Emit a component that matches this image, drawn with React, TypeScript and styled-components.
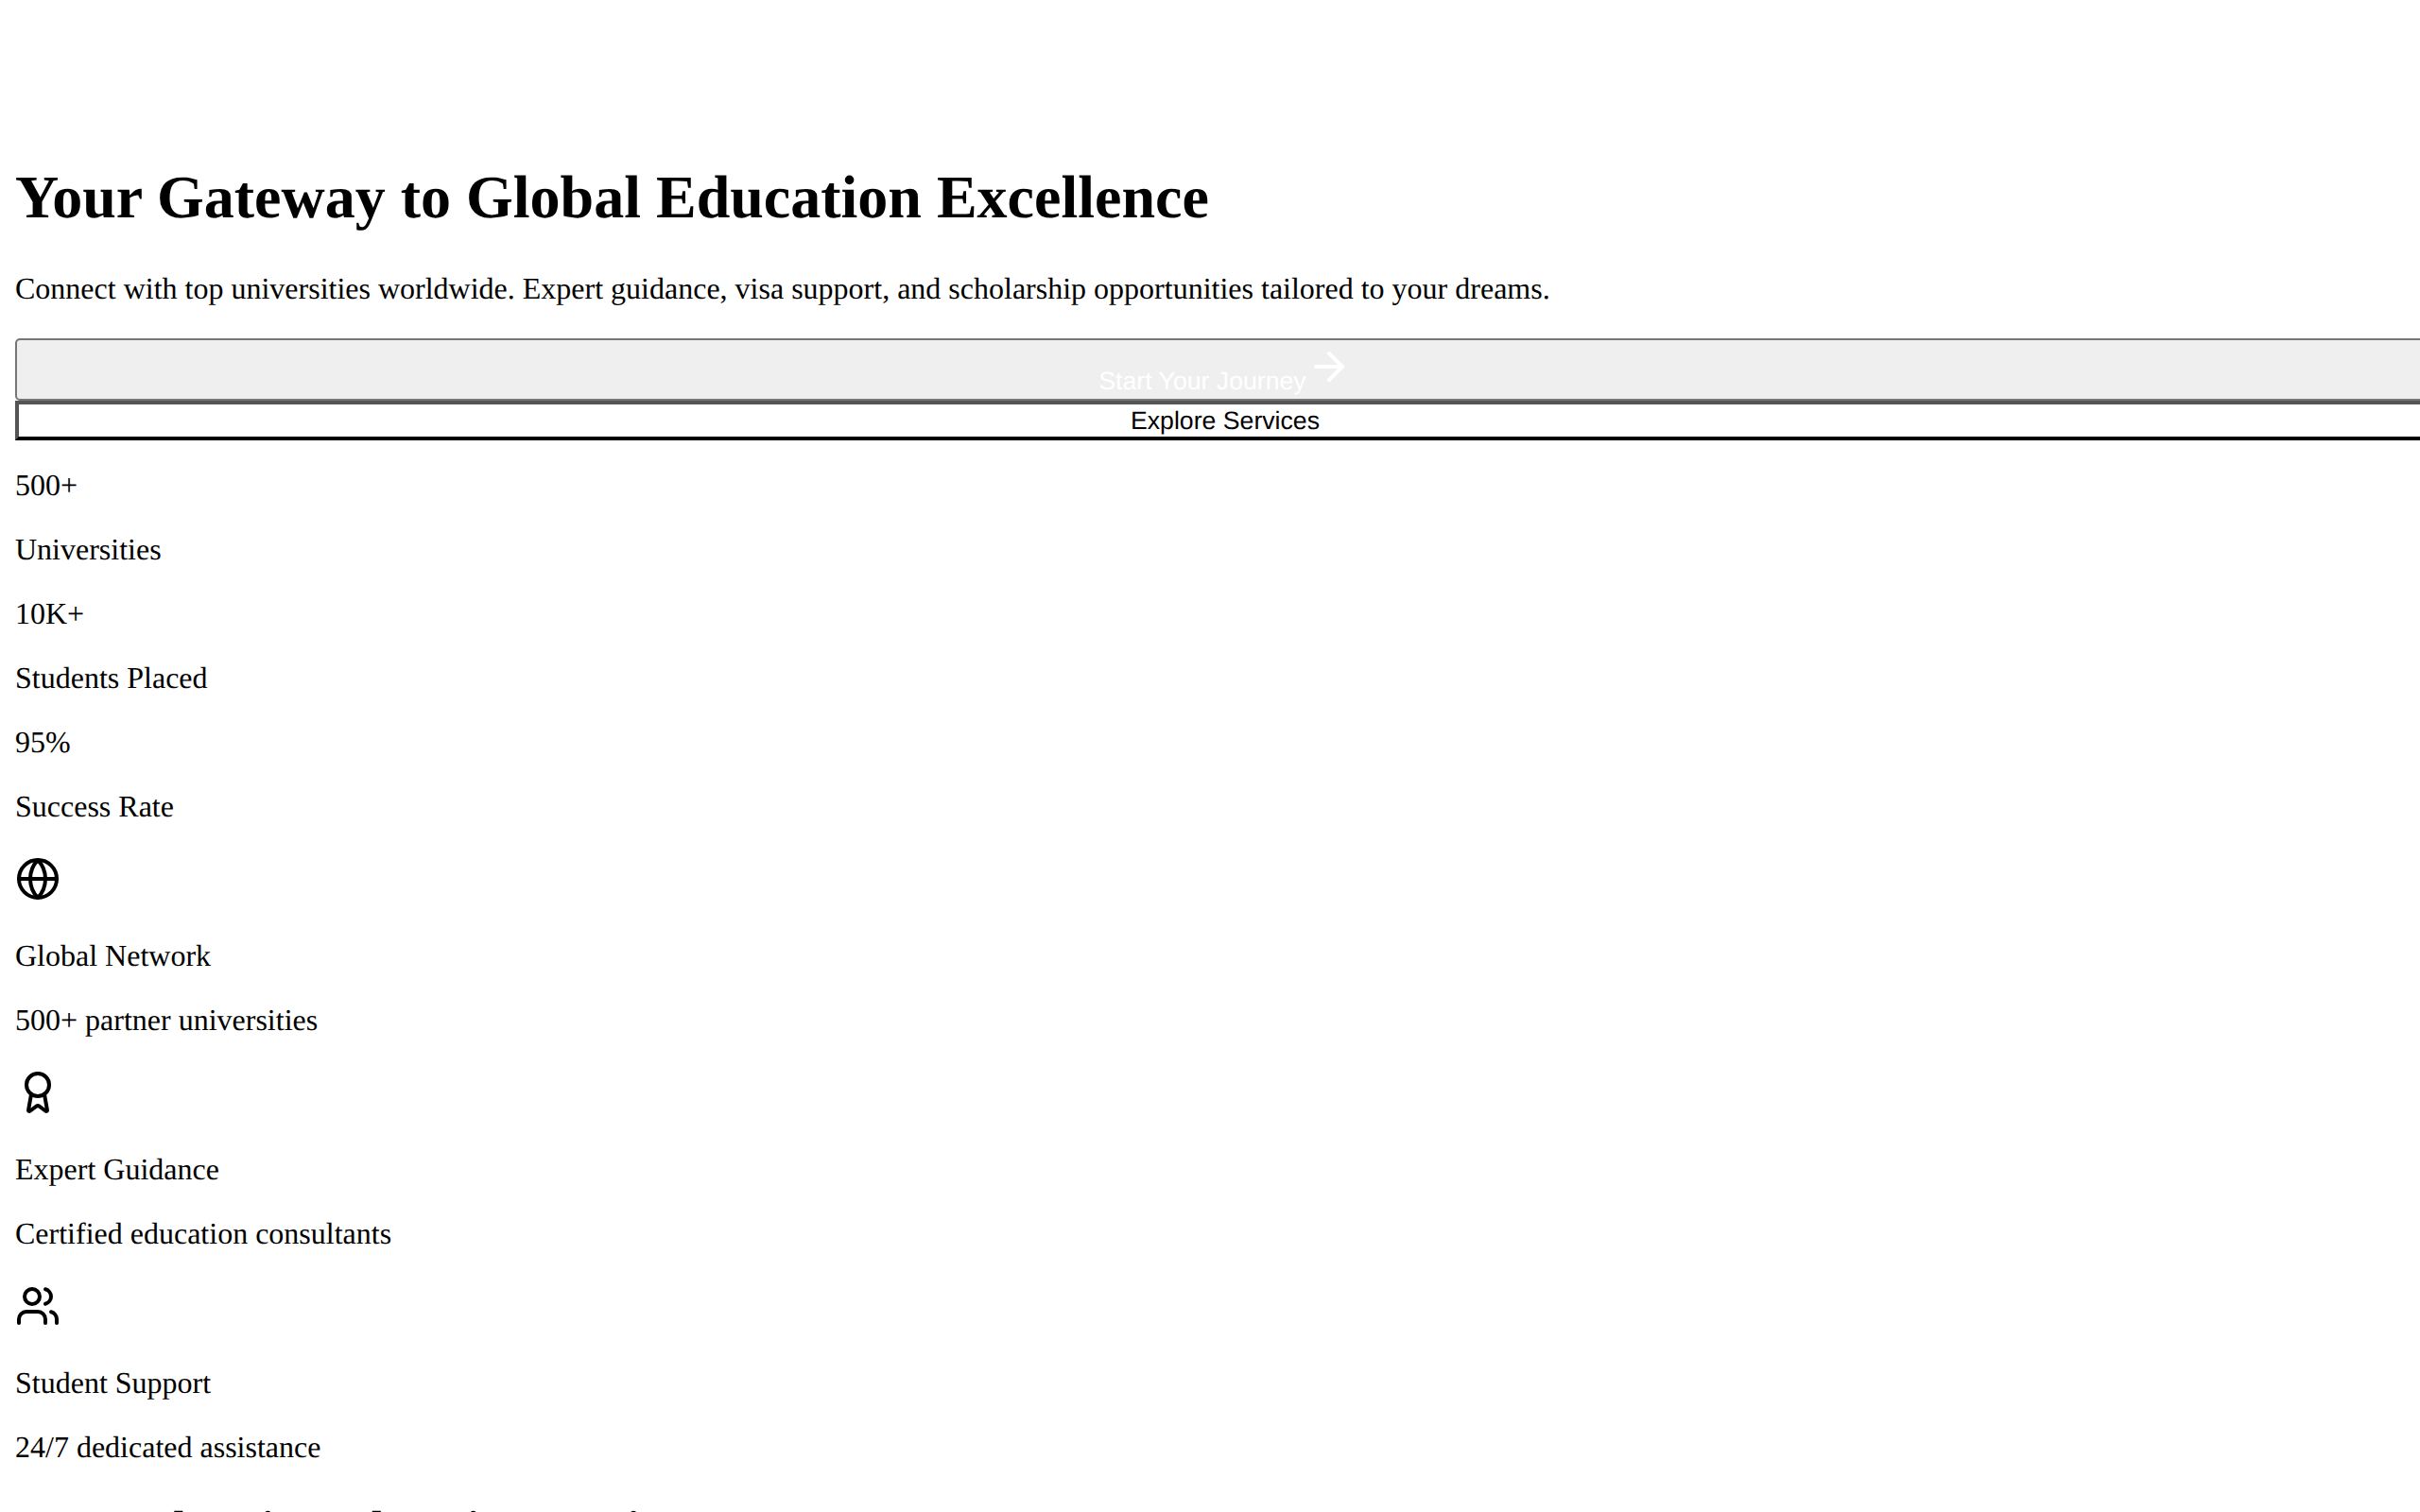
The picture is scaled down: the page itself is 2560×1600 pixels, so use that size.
import React from "react";
import { createGlobalStyle, styled } from "styled-components";
import { ArrowRight, Award, Globe, Users } from "lucide-react";

const GlobalStyle = createGlobalStyle`
  html,
  body {
    margin: 0;
    overflow: hidden;
    background-color: #fff;
  }
`;

const StyledPage = styled.main`
  box-sizing: border-box;
  width: 2560px;
  height: 1600px;
  padding: 172px 0 0 16px;
  overflow: hidden;
  font-family: "Liberation Serif", "Times New Roman", serif;
  font-size: 32px;
  line-height: 34px;
  color: #000;
  text-rendering: geometricPrecision;
`;

const StyledH1 = styled.h1`
  margin: 0;
  padding-bottom: 42px;
  font-size: 64px;
  font-weight: 700;
  line-height: 74px;
`;

const StyledText = styled.p`
  margin: 0 0 34px;
`;

const StyledActions = styled.div`
  display: flex;
  flex-direction: column;
  width: 2560px;
  padding-top: 2px;
  margin-bottom: 30px;
`;

const StyledButton = styled.button`
  box-sizing: border-box;
  width: 100%;
  margin: 0;
  font-family: "Liberation Sans", Arial, sans-serif;
  font-size: 26.6667px;
  line-height: 30px;
  text-rendering: geometricPrecision;
`;

const StyledPrimaryBtn = styled(StyledButton)`
  height: 66px;
  padding: 4px 14px;
  border: 2px solid #767676;
  border-radius: 5px;
  background-color: #efefef;
  color: #fff;
`;

const StyledOutlineBtn = styled(StyledButton)`
  height: 42px;
  padding: 2px 12px;
  border: 4px solid;
  border-color: #555 #000 #000 #555;
  background-color: transparent;
  color: #000;
`;

const StyledIconRow = styled.div`
  display: flex;
  height: 58px;
  padding-top: 2px;
  margin-bottom: 32px;
  box-sizing: border-box;
`;

const StyledH2 = styled.h2`
  margin: 0;
  padding-top: 8px;
  font-size: 48px;
  font-weight: 700;
  line-height: 54px;
`;

const stats = [
  { value: "500+", label: "Universities" },
  { value: "10K+", label: "Students Placed" },
  { value: "95%", label: "Success Rate" },
];

const features = [
  { icon: Globe, title: "Global Network", text: "500+ partner universities" },
  { icon: Award, title: "Expert Guidance", text: "Certified education consultants" },
  { icon: Users, title: "Student Support", text: "24/7 dedicated assistance" },
];

const Hero: React.FC = () => (
  <section>
    <StyledH1>Your Gateway to Global Education Excellence</StyledH1>
    <StyledText>
      Connect with top universities worldwide. Expert guidance, visa support,
      and scholarship opportunities tailored to your dreams.
    </StyledText>
    <StyledActions>
      <StyledPrimaryBtn>
        Start Your Journey
        <ArrowRight size={48} />
      </StyledPrimaryBtn>
      <StyledOutlineBtn>Explore Services</StyledOutlineBtn>
    </StyledActions>
    {stats.map(({ value, label }) => (
      <div key={label}>
        <StyledText>{value}</StyledText>
        <StyledText>{label}</StyledText>
      </div>
    ))}
    {features.map(({ icon: Icon, title, text }) => (
      <div key={title}>
        <StyledIconRow>
          <Icon size={48} />
        </StyledIconRow>
        <StyledText>{title}</StyledText>
        <StyledText>{text}</StyledText>
      </div>
    ))}
  </section>
);

export default function App() {
  return (
    <>
      <GlobalStyle />
      <StyledPage>
        <Hero />
        <StyledH2>Comprehensive Education Services</StyledH2>
      </StyledPage>
    </>
  );
}
